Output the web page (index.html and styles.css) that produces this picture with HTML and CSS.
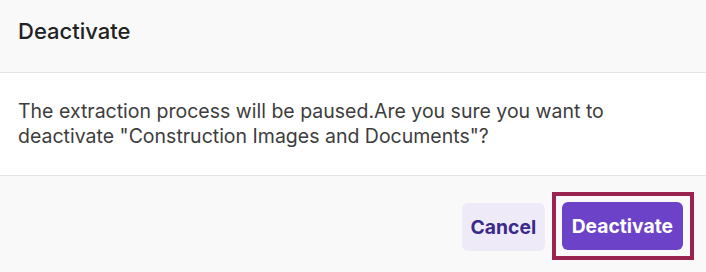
FILE: index.html
```html
<!DOCTYPE html>
<html lang="en">

<head>
    <meta charset="UTF-8">
    <meta name="viewport" content="width=device-width, initial-scale=1.0">
    <title>Deactivate</title>
    <link rel="stylesheet" href="styles.css">
</head>

<body>
    <div class="dialog">
        <div class="dialog-header">
            <h2>Deactivate</h2>
        </div>
        <div class="dialog-body">
            <p>The extraction process will be paused.Are you sure you want to deactivate "Construction Images and Documents"?</p>
        </div>
        <div class="dialog-footer">
            <button class="btn btn-cancel">Cancel</button>
            <!-- keyboard focus ring around the primary action -->
            <div class="focus-ring">
                <button class="btn btn-confirm">Deactivate</button>
            </div>
        </div>
    </div>
</body>

</html>
```

FILE: styles.css
```css
body {
    margin: 0;
    font-family: Inter, 'Noto Sans', sans-serif;
    color: #333;
    background: #fff;
}

.dialog {
    width: 706px;
    height: 272px;
    display: flex;
    flex-direction: column;
}

.dialog-header {
    background-color: #f9f9f9;
    padding: 17px 18px 27px;
    border-bottom: 1px solid #e3e3e3;
}

.dialog-header h2 {
    margin: 0;
    font-size: 22px;
    line-height: 28px;
    font-weight: 500;
    color: #222;
}

.dialog-body {
    padding: 26px 18px;
    border-bottom: 1px solid #e3e3e3;
}

.dialog-body p {
    margin: 0;
    font-size: 19.5px;
    line-height: 25px;
    color: #3d3d3d;
    max-width: 640px;
}

.dialog-footer {
    flex: 1;
    background-color: #f9f9f9;
    display: flex;
    justify-content: flex-end;
    align-items: flex-start;
    gap: 7px;
    padding: 16px 12px 0;
}

.btn {
    font-family: Inter, 'Noto Sans', sans-serif;
    font-size: 19.3px;
    font-weight: 700;
    height: 48px;
    padding: 0 10px;
    border: none;
    border-radius: 6px;
    cursor: pointer;
}

.btn-cancel {
    background-color: #efeaf8;
    color: #3b2a8c;
    padding: 0 8.5px;
    margin-top: 11px;
}

.btn-confirm {
    display: block;
    background-color: #6c42c8;
    color: #fff;
}

.focus-ring {
    border: 4px solid #9b2350;
    padding: 6px 7px 6px 6px;
}
```
